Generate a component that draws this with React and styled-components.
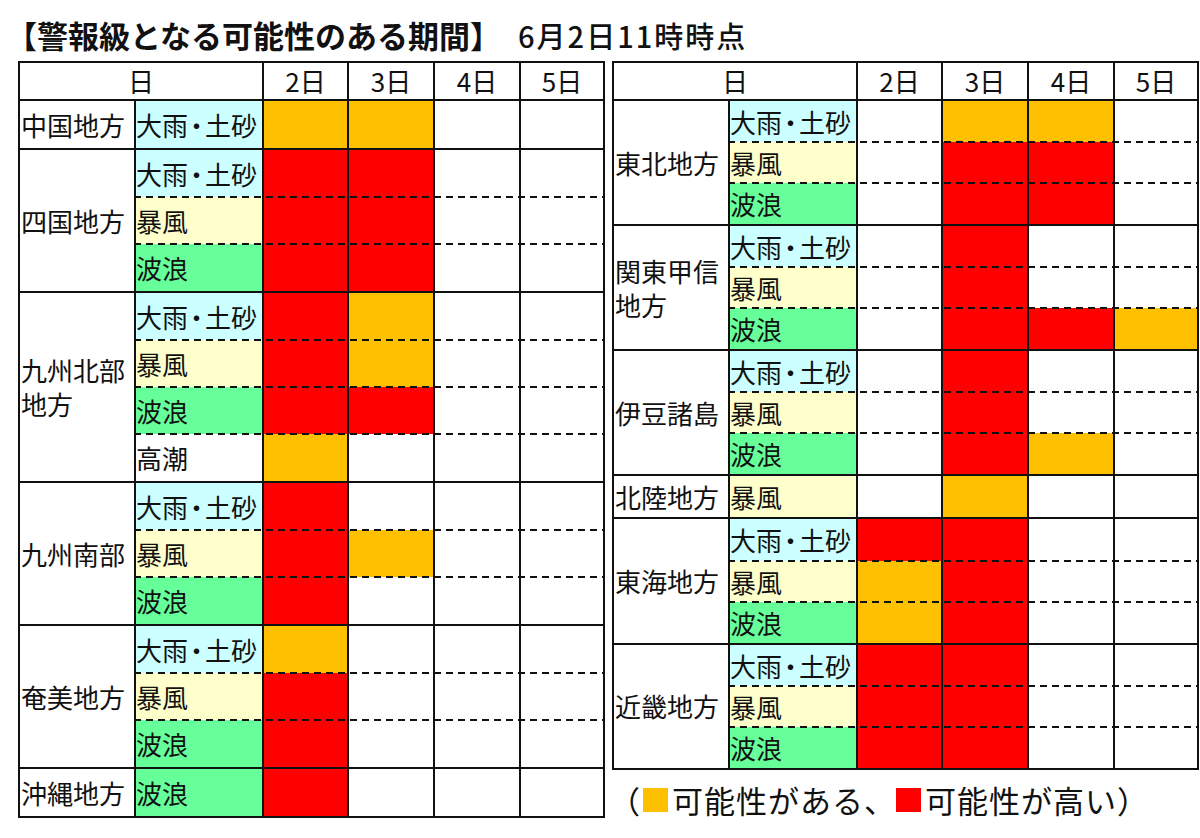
import React from "react";
import styled, { createGlobalStyle, css } from "styled-components";

const GlobalStyle = createGlobalStyle`
  html, body {
    margin: 0;
    padding: 0;
    background: #fff;
  }
  body {
    width: 1200px;
    height: 838px;
    overflow: hidden;
    font-family: "Noto Sans CJK JP", "Noto Sans", sans-serif;
    color: #111;
  }
`;

const LINE = "#111";

const LEVEL = {
  O: "#ffc000",
  R: "#ff0000",
  "-": "#ffffff"
};

const HAZARD_BG = {
  "大雨・土砂": "#ccffff",
  暴風: "#ffffcc",
  波浪: "#66ff99",
  高潮: "#ffffff"
};

const DAYS = ["2日", "3日", "4日", "5日"];
const COLS = "128px 85px 86px 86px 84px";

const LEFT = [
  { name: "中国地方", rows: [["大雨・土砂", "OO--"]] },
  {
    name: "四国地方",
    rows: [
      ["大雨・土砂", "RR--"],
      ["暴風", "RR--"],
      ["波浪", "RR--"]
    ]
  },
  {
    name: "九州北部地方",
    rows: [
      ["大雨・土砂", "RO--"],
      ["暴風", "RO--"],
      ["波浪", "RR--"],
      ["高潮", "O---"]
    ]
  },
  {
    name: "九州南部",
    rows: [
      ["大雨・土砂", "R---"],
      ["暴風", "RO--"],
      ["波浪", "R---"]
    ]
  },
  {
    name: "奄美地方",
    rows: [
      ["大雨・土砂", "O---"],
      ["暴風", "R---"],
      ["波浪", "R---"]
    ]
  },
  { name: "沖縄地方", rows: [["波浪", "R---"]] }
];

const RIGHT = [
  {
    name: "東北地方",
    rows: [
      ["大雨・土砂", "-OO-"],
      ["暴風", "-RR-"],
      ["波浪", "-RR-"]
    ]
  },
  {
    name: "関東甲信地方",
    rows: [
      ["大雨・土砂", "-R--"],
      ["暴風", "-R--"],
      ["波浪", "-RRO"]
    ]
  },
  {
    name: "伊豆諸島",
    rows: [
      ["大雨・土砂", "-R--"],
      ["暴風", "-R--"],
      ["波浪", "-RO-"]
    ]
  },
  { name: "北陸地方", rows: [["暴風", "-O--"]] },
  {
    name: "東海地方",
    rows: [
      ["大雨・土砂", "RR--"],
      ["暴風", "OR--"],
      ["波浪", "OR--"]
    ]
  },
  {
    name: "近畿地方",
    rows: [
      ["大雨・土砂", "RR--"],
      ["暴風", "RR--"],
      ["波浪", "RR--"]
    ]
  }
];

const Page = styled.div`
  padding-left: 18px;
`;

const Title = styled.div`
  display: flex;
  align-items: baseline;
  height: 61px;
  padding-top: 14px;
  box-sizing: border-box;
  margin-left: -12px;
  white-space: nowrap;
`;

const TitleMain = styled.span`
  font-size: 31px;
  font-weight: 700;
  line-height: 40px;
`;

const TitleDate = styled.span`
  font-size: 29px;
  font-weight: 500;
  letter-spacing: 2px;
  margin-left: 17px;
`;

const Boards = styled.div`
  display: flex;
  gap: 7px;
  align-items: flex-start;
`;

const Column = styled.div`
  display: flex;
  flex-direction: column;
`;

const Table = styled.div`
  width: 587px;
  box-sizing: border-box;
  border: 2px solid ${LINE};
  font-size: 26px;
`;

const HeadRow = styled.div`
  display: grid;
  grid-template-columns: 242px 85px 86px 86px 84px;
  height: 36px;
`;

const HeadCell = styled.div`
  display: flex;
  align-items: center;
  justify-content: center;
  line-height: 36px;
  ${p =>
    !p.$first &&
    css`
      border-left: 2px solid ${LINE};
    `}
`;

const Block = styled.div`
  display: grid;
  grid-template-columns: 114px 1fr;
  border-top: 2px solid ${LINE};
`;

const RegionCell = styled.div`
  display: flex;
  align-items: center;
  padding-left: 1px;
  line-height: 34px;
`;

const Rows = styled.div`
  display: flex;
  flex-direction: column;
`;

const SubRow = styled.div`
  position: relative;
  display: grid;
  grid-template-columns: ${COLS};
  height: ${p => p.$h}px;

  ${p =>
    p.$dashed &&
    css`
      &::before {
        content: "";
        position: absolute;
        left: 0;
        right: 0;
        top: -1px;
        height: 2px;
        background: repeating-linear-gradient(
          to right,
          ${LINE} 0 7px,
          transparent 7px 12px
        );
        z-index: 1;
      }
    `}
`;

const HazardCell = styled.div`
  display: flex;
  align-items: center;
  white-space: nowrap;
  border-left: 2px solid ${LINE};
  background: ${p => p.$bg};
`;

/* proportional metrics make the middle dot narrower, as in the chart */
const Dot = styled.span`
  font-feature-settings: "palt";
  padding: 0 2px;
`;

const DayCell = styled.div`
  border-left: 2px solid ${LINE};
  background: ${p => p.$bg};
`;

const Legend = styled.div`
  display: flex;
  align-items: center;
  margin-top: 12px;
  margin-left: -3px;
  font-size: 31px;
  letter-spacing: 1px;
  line-height: 36px;
  white-space: nowrap;
`;

const Swatch = styled.span`
  display: inline-block;
  width: 25px;
  height: 24px;
  background: ${p => p.$color};
  margin: 0 4px 0 ${p => p.$gap}px;
`;

function HazardLabel({ text }) {
  const parts = text.split("・");
  if (parts.length < 2) return text;
  return (
    <>
      <span>{parts[0]}</span>
      <Dot>・</Dot>
      <span>{parts[1]}</span>
    </>
  );
}

function Board({ regions, rowH }) {
  return (
    <Table>
      <HeadRow>
        <HeadCell $first>日</HeadCell>
        {DAYS.map(d => (
          <HeadCell key={d}>{d}</HeadCell>
        ))}
      </HeadRow>
      {regions.map(region => (
        <Block key={region.name}>
          <RegionCell>{region.name}</RegionCell>
          <Rows>
            {region.rows.map(([hazard, levels], i) => (
              <SubRow key={hazard} $h={rowH} $dashed={i > 0}>
                <HazardCell $bg={HAZARD_BG[hazard]}>
                  <HazardLabel text={hazard} />
                </HazardCell>
                {levels.split("").map((lv, j) => (
                  <DayCell key={j} $bg={LEVEL[lv]} />
                ))}
              </SubRow>
            ))}
          </Rows>
        </Block>
      ))}
    </Table>
  );
}

export default function App() {
  return (
    <Page>
      <GlobalStyle />
      <Title>
        <TitleMain>【警報級となる可能性のある期間】</TitleMain>
        <TitleDate>6月2日11時時点</TitleDate>
      </Title>
      <Boards>
        <Board regions={LEFT} rowH={47} />
        <Column>
          <Board regions={RIGHT} rowH={41.06} />
          <Legend>
            （<Swatch $color={LEVEL.O} $gap={2} />
            可能性がある、
            <Swatch $color={LEVEL.R} $gap={0} />
            可能性が高い）
          </Legend>
        </Column>
      </Boards>
    </Page>
  );
}
